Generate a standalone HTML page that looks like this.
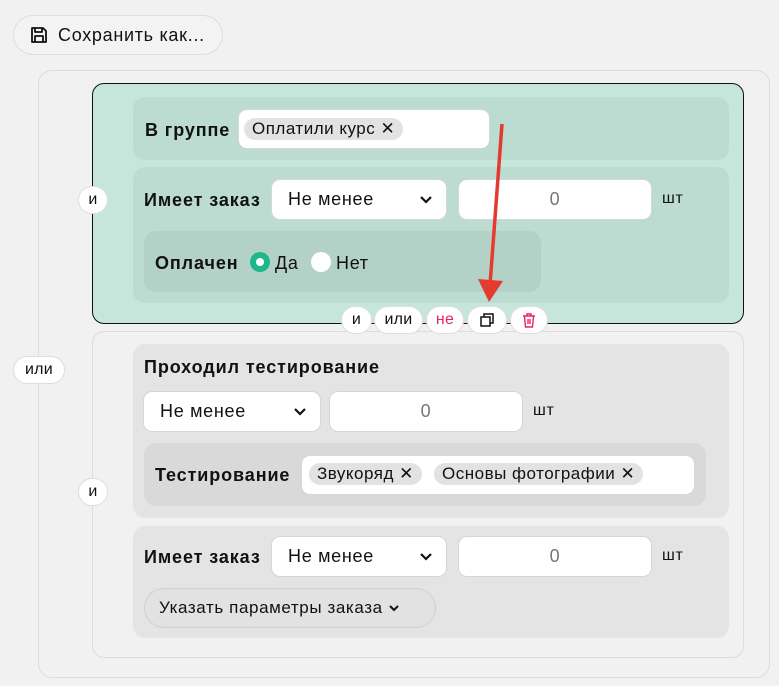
<!DOCTYPE html>
<html><head><meta charset="utf-8"><style>
*{box-sizing:border-box;margin:0;padding:0}
body{width:779px;height:686px;background:#f1f1f1;font-family:"Liberation Sans",sans-serif;color:#111;position:relative;overflow:hidden;font-size:18px;letter-spacing:0.7px}
.a{position:absolute}
.box{position:absolute;border-radius:12px}
.lbl{position:absolute;font-weight:bold;font-size:18px;line-height:20px;letter-spacing:0.9px}
.inp{position:absolute;background:#fff;border:1px solid #d6d6d6;border-radius:9px}
.sel{position:absolute;background:#fff;border:1px solid #d6d6d6;border-radius:9px;padding-left:16px;font-size:18px;display:flex;align-items:center}
.sel svg{position:absolute;right:14px;top:50%;margin-top:-4px}
.num{display:flex;align-items:center;justify-content:center;color:#777;font-size:18px}
.chip{position:absolute;background:#e2e2e2;border-radius:11px;font-size:17px;line-height:22px;padding:0 8px;letter-spacing:0.5px;white-space:nowrap}
.pill{position:absolute;background:#fff;border:1px solid #ddd;border-radius:14px;display:flex;align-items:center;justify-content:center;font-size:16px;letter-spacing:0.3px}
.sht{position:absolute;font-size:16px}
</style></head><body>
<div class="pill" style="left:13px;top:15px;width:210px;height:40px;border-radius:20px;background:#f3f3f3;justify-content:flex-start;padding-left:16px;font-size:18px;letter-spacing:0.7px">
<svg width="18" height="18" viewBox="0 0 18 18" style="margin-right:10px"><path d="M2 2h11l3 3v11H2z M5 2v4h7V2 M5 16v-6h8v6" fill="none" stroke="#111" stroke-width="1.8" stroke-linejoin="round"/></svg>Сохранить как...</div>

<div class="box" style="left:38px;top:70px;width:732px;height:608px;border:1px solid #dcdcdc;border-radius:14px;background:#f1f1f1"></div>

<div class="box" style="left:92px;top:83px;width:652px;height:241px;background:#c6e6db;border:1px solid #111"></div>
<div class="box" style="left:133px;top:97px;width:596px;height:63px;background:#bcdcd1"></div>
<div class="lbl" style="left:145px;top:120px">В группе</div>
<div class="inp" style="left:238px;top:109px;width:252px;height:40px"></div>
<div class="chip" style="left:244px;top:118px">Оплатили курс ✕</div>

<div class="box" style="left:133px;top:167px;width:596px;height:136px;background:#bcdcd1"></div>
<div class="lbl" style="left:144px;top:190px">Имеет заказ</div>
<div class="sel" style="left:271px;top:179px;width:176px;height:41px">Не менее<svg width="12" height="8"><path d="M1 1l5 5 5-5" fill="none" stroke="#111" stroke-width="2.2"/></svg></div>
<div class="inp num" style="left:458px;top:179px;width:194px;height:41px">0</div>
<div class="sht" style="left:662px;top:190px">шт</div>
<div class="box" style="left:144px;top:231px;width:397px;height:61px;background:#b4d1c7"></div>
<div class="lbl" style="left:155px;top:253px">Оплачен</div>
<div class="a" style="left:250px;top:252px;width:20px;height:20px;border-radius:50%;background:#1db88a"><div class="a" style="left:6px;top:6px;width:8px;height:8px;border-radius:50%;background:#fff"></div></div>
<div class="a" style="left:275px;top:253px">Да</div>
<div class="a" style="left:311px;top:252px;width:20px;height:20px;border-radius:50%;background:#fff"></div>
<div class="a" style="left:336px;top:253px">Нет</div>
<div class="pill" style="left:78px;top:186px;width:30px;height:28px">и</div>

<div class="box" style="left:92px;top:331px;width:652px;height:327px;border:1px solid #dcdcdc;background:#f1f1f1"></div>
<div class="pill" style="left:341px;top:306px;width:31px;height:28px">и</div>
<div class="pill" style="left:374px;top:306px;width:49px;height:28px">или</div>
<div class="pill" style="left:426px;top:306px;width:38px;height:28px;color:#e8255a">не</div>
<div class="pill" style="left:467px;top:306px;width:40px;height:28px"><svg width="14" height="14"><path d="M1 4h9v9H1z M4 4V1h9v9h-3" fill="none" stroke="#111" stroke-width="1.5"/></svg></div>
<div class="pill" style="left:510px;top:306px;width:38px;height:28px"><svg width="14" height="15"><path d="M1 3h12 M5 3V1h4v2 M2.5 3l1 11h7l1-11 M6 6v5 M8 6v5" fill="none" stroke="#e8255a" stroke-width="1.4"/></svg></div>

<div class="box" style="left:133px;top:344px;width:596px;height:174px;background:#e4e4e4"></div>
<div class="lbl" style="left:144px;top:357px">Проходил тестирование</div>
<div class="sel" style="left:143px;top:391px;width:178px;height:41px">Не менее<svg width="12" height="8"><path d="M1 1l5 5 5-5" fill="none" stroke="#111" stroke-width="2.2"/></svg></div>
<div class="inp num" style="left:329px;top:391px;width:194px;height:41px">0</div>
<div class="sht" style="left:533px;top:402px">шт</div>
<div class="box" style="left:144px;top:443px;width:562px;height:63px;background:#d9d9d9"></div>
<div class="lbl" style="left:155px;top:465px">Тестирование</div>
<div class="inp" style="left:301px;top:455px;width:394px;height:40px"></div>
<div class="chip" style="left:309px;top:463px">Звукоряд ✕</div>
<div class="chip" style="left:434px;top:463px">Основы фотографии ✕</div>
<div class="pill" style="left:78px;top:478px;width:30px;height:28px">и</div>
<div class="pill" style="left:13px;top:356px;width:52px;height:28px">или</div>

<div class="box" style="left:133px;top:526px;width:596px;height:112px;background:#e4e4e4"></div>
<div class="lbl" style="left:144px;top:547px">Имеет заказ</div>
<div class="sel" style="left:271px;top:536px;width:176px;height:41px">Не менее<svg width="12" height="8"><path d="M1 1l5 5 5-5" fill="none" stroke="#111" stroke-width="2.2"/></svg></div>
<div class="inp num" style="left:458px;top:536px;width:194px;height:41px">0</div>
<div class="sht" style="left:662px;top:547px">шт</div>
<div class="pill" style="left:144px;top:588px;width:292px;height:40px;border-radius:20px;background:#e2e2e2;border-color:#cfcfcf;font-size:17px;letter-spacing:0.6px;justify-content:flex-start;padding-left:14px;white-space:nowrap">Указать параметры заказа<svg width="10" height="7" style="margin-left:6px"><path d="M1 1l4 4 4-4" fill="none" stroke="#111" stroke-width="2"/></svg></div>

<svg class="a" style="left:0;top:0" width="779" height="686"><path d="M502 124L490 285" stroke="#e53a30" stroke-width="3.5"/><path d="M478 279L489 302L503 281Z" fill="#e53a30"/></svg>
</body></html>
